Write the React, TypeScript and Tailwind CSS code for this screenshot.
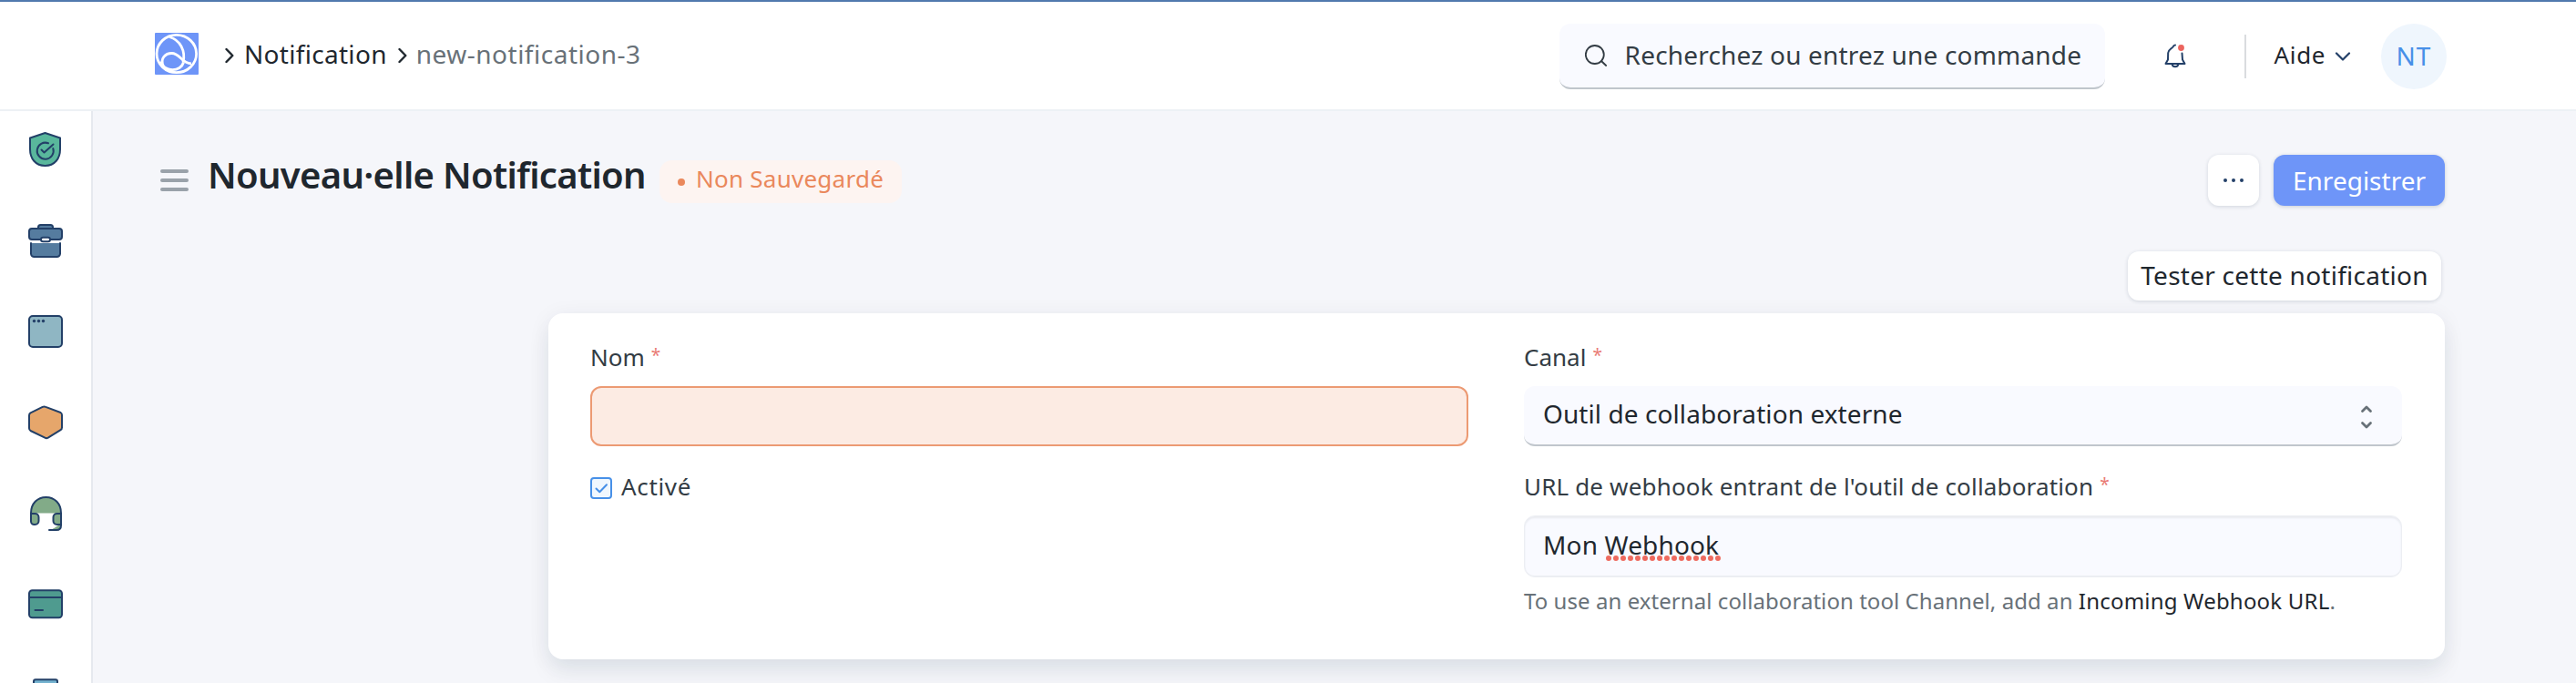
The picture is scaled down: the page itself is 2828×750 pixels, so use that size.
import type { ReactNode } from "react";

const INK = "#234068";

function Tile({ children }: { children: ReactNode }) {
  return (
    <svg className="block size-[40px] shrink-0" viewBox="0 0 40 40" fill="none" stroke={INK} strokeWidth="2" strokeLinecap="round" strokeLinejoin="round">
      {children}
    </svg>
  );
}

function Sidebar() {
  return (
    <nav className="flex w-[102px] shrink-0 flex-col items-center gap-[60px] border-r-2 border-[#e6e9ef] bg-white pt-[22px]">
      <Tile>
        <path d="M19.5 2 36 7.5V20c0 10-6 18-16.500 18S3 30 3 20V7.500Z" fill="#59b79c" />
        <path d="M23 13.300a9 9 0 1 0 5.300 5.700" />
        <path d="m15.500 20.500 3 3 10-9" />
      </Tile>
      <Tile>
        <path d="M12 7V5.500a2.500 2.500 0 0 1 2.500-2.500h11A2.500 2.500 0 0 1 28 5.500V7" fill="#557c9f" />
        <rect x="2" y="7" width="36" height="12" rx="3" fill="#557c9f" />
        <path d="M4 23v11.500A3.500 3.500 0 0 0 7.500 38h25a3.500 3.500 0 0 0 3.500-3.500V23" fill="#557c9f" />
        <rect x="15" y="16.700" width="10" height="4.600" rx="2.300" fill="#fff" />
      </Tile>
      <Tile>
        <rect x="2" y="3" width="36" height="34" rx="4" fill="#8fb6c3" />
        <g fill={INK} stroke="none">
          <circle cx="7.500" cy="8.500" r="1.700" />
          <circle cx="12.500" cy="8.500" r="1.700" />
          <circle cx="17.500" cy="8.500" r="1.700" />
        </g>
      </Tile>
      <Tile>
        <path d="M16.700 2.900q1.800-.8 3.500 0L36.500 9q1.500.9 1.500 2.700V25.500q0 1.800-1.500 2.600L22.800 36.700q-1.800.9-3.500 0L3.500 29Q2 28 2 26.300V12.200q0-1.800 1.500-2.800Z" fill="#e6a66b" />
      </Tile>
      <Tile>
        <path d="M4 19.500C4 9 11 2 20.500 2S37 9 37 19.500Z" fill="#82ab88" stroke="none" />
        <path d="M37 31c-2 1-8 6-13 7.500h8q5 0 5-5Z" fill="#82ab88" stroke="none" />
        <path d="M4 20h4.500a4 4 0 0 1 4 4v4a4 4 0 0 1-4 4h-1A3.500 3.500 0 0 1 4 28.500Z" fill="#82ab88" />
        <path d="M37 20h-4.500a4 4 0 0 0-4 4v4a4 4 0 0 0 4 4H37Z" fill="#82ab88" />
        <path d="M4 21v-1.500C4 9 11 2 20.500 2S37 9 37 19.500V33q0 5-5 5h-8" />
      </Tile>
      <Tile>
        <rect x="2" y="4.300" width="36" height="30" rx="3.500" fill="#4f9b8f" />
        <path d="M2 12h36M8.500 26h8.500" />
      </Tile>
      <Tile>
        <rect x="7" y="2.300" width="26" height="34" rx="2" fill="#74b2cf" />
      </Tile>
    </nav>
  );
}

function Chevron() {
  return (
    <svg className="mt-[4px] block h-[18px] w-[10px] shrink-0" viewBox="0 0 10 18" fill="none" stroke="#1f272e" strokeWidth="2.400" strokeLinecap="round" strokeLinejoin="round">
      <path d="m1.500 2 6.800 7-6.800 7" />
    </svg>
  );
}

function Header() {
  return (
    <header className="flex h-[122px] shrink-0 items-center justify-between border-y-2 border-t-[#5179ae] border-b-[#edf1f5] bg-white pr-[142px] pl-[170px] text-[28px] leading-[40px] whitespace-nowrap">
      <div className="mb-[4px] flex items-center">
        <svg className="block h-[46px] w-[48px]" viewBox="0 0 48 46" fill="none" stroke="#fff" strokeWidth="2.800">
          <rect width="48" height="46" rx="1" fill="#6e95f8" stroke="none" />
          <ellipse cx="23.800" cy="23" rx="21.800" ry="20.700" />
          <path d="M16 4.500C28 8 34 20 31 32.500" />
          <path d="M9.500 37C5 28 12 22.500 18.500 22.500c9.500 0 10.500 11.300 21.500 11.300" />
          <path d="M7 31.500C8 40 20 43 27 38.500q3.500-2.500 4.500-6" />
        </svg>
        <div className="ml-[29px]"><Chevron /></div>
        <span className="ml-[11px] tracking-[0.300px] text-[#1f272e]">Notification</span>
        <div className="ml-[12px]"><Chevron /></div>
        <span className="ml-[10px] tracking-[0.500px] text-[#687178]">new-notification-3</span>
      </div>
      <div className="flex items-center">
        <div className="mt-[2px] flex h-[72px] w-[599px] items-center rounded-[12px] border-b-2 border-[#c0c6cc] bg-[#f9faff] pl-[28px]">
          <svg className="block size-[24px]" viewBox="0 0 24 24" fill="none" stroke="#333c44" strokeWidth="1.800" strokeLinecap="round">
            <circle cx="10.800" cy="11" r="10" />
            <path d="m18 18 5.200 5" />
          </svg>
          <span className="mb-[3px] ml-[20px] tracking-[0.180px] text-[#333c44]">Recherchez ou entrez une commande</span>
        </div>
        <svg className="ml-[64px] block h-[28px] w-[26px]" viewBox="0 0 26 28" fill="none" stroke={INK} strokeWidth="2" strokeLinecap="round" strokeLinejoin="round">
          <path d="M13 2.500C11.500 2.500 11 3.500 10.500 4.500 9 6.500 5.500 7.500 5.200 11L5 18.500 2.500 23h21L21 18.500 20.500 11.500" />
          <path d="M9.500 23.500a3.600 3.600 0 0 0 7 0" />
          <circle cx="19.500" cy="5.500" r="3.400" fill="#ec645e" stroke="none" />
        </svg>
        <div className="mt-[2px] ml-[63px] h-[48px] w-[2px] bg-[#d9dcdf]" />
        <span className="mb-[2px] ml-[31px] text-[26px] tracking-[0.600px] text-[#1f272e]">Aide</span>
        <svg className="mt-[2px] ml-[10px] block h-[10px] w-[18px]" viewBox="0 0 18 10" fill="none" stroke={INK} strokeWidth="2.200" strokeLinecap="round" strokeLinejoin="round">
          <path d="m2 1.500 7 7 7-7" />
        </svg>
        <div className="mt-[2px] ml-[33px] flex size-[72px] items-center justify-center rounded-full bg-[#eff6fd] pb-[3px] text-[#4790e8]"><span className="tracking-[1px]">NT</span></div>
      </div>
    </header>
  );
}

function Label({ children, required }: { children: ReactNode; required?: boolean }) {
  return (
    <div className="flex text-[26px] leading-[36px] whitespace-nowrap text-[#333c44]">
      {children}
      {required && <span className="ml-[7px] text-[19px] leading-[32px] text-[#e97a74]">*</span>}
    </div>
  );
}

export default function App() {
  return (
    <div className="flex h-[750px] flex-col overflow-hidden bg-[#f5f6fa] font-['Noto_Sans',sans-serif] text-[#1f272e]">
      <Header />
      <div className="flex min-h-0 flex-1">
        <Sidebar />
        <main className="min-w-0 flex-1 pt-[48px] pr-[144px] pl-[74px] whitespace-nowrap">
          <div className="flex h-[56px] items-center">
            <div className="flex w-[31px] flex-col gap-[6px]">
              <div className="h-[4px] rounded-full bg-[#9aa2aa]" />
              <div className="h-[4px] rounded-full bg-[#9aa2aa]" />
              <div className="h-[4px] rounded-full bg-[#9aa2aa]" />
            </div>
            <h1 className="mb-[13px] ml-[21px] w-[496px] text-[40px] leading-[48px] font-semibold tracking-[-0.700px]">Nouveau·elle Notification</h1>
            <div className="mt-[3px] flex h-[47px] w-[266px] items-center rounded-[14px] bg-[#fdf4f1] pl-[20px] text-[#ea885c]">
              <div className="size-[8px] rounded-full bg-[#ea885c]" />
              <span className="mb-[7px] ml-[12px] text-[26px] leading-[36px] tracking-[0.250px]">Non Sauvegardé</span>
            </div>
            <button className="ml-auto flex h-[56px] w-[56px] items-center justify-center gap-[5px] rounded-[12px] bg-white shadow-[0_1px_4px_rgba(17,43,66,0.160)]">
              <i className="size-[4px] rounded-full bg-[#234068]" />
              <i className="size-[4px] rounded-full bg-[#234068]" />
              <i className="size-[4px] rounded-full bg-[#234068]" />
            </button>
            <button className="ml-[16px] flex h-[56px] w-[188px] items-center justify-center rounded-[12px] bg-[#6e95f8] pb-[1px] text-[28px] leading-[40px] text-white shadow-[0_1px_4px_rgba(17,43,66,0.200)]">Enregistrer</button>
          </div>
          <div className="mt-[50px] flex h-[54px] justify-end pr-[4px]">
            <button className="flex h-[54px] w-[344px] items-center justify-center rounded-[12px] bg-white pb-[3px] text-[28px] leading-[40px] tracking-[0.250px] shadow-[0_1px_4px_rgba(17,43,66,0.160)]">Tester cette notification</button>
          </div>
          <section className="mt-[14px] ml-[426px] grid h-[380px] grid-cols-2 gap-x-[61px] rounded-[16px] bg-white pt-[30px] pr-[47px] pl-[46px] shadow-[0_16px_24px_rgba(17,43,66,0.060),0_4px_24px_rgba(17,43,66,0.070)]">
            <div>
              <Label required>Nom</Label>
              <div className="mt-[14px] h-[66px] rounded-[12px] border-2 border-[#ec9a73] bg-[#fcebe3]" />
              <div className="mt-[26px] flex items-start">
                <svg className="mt-[8px] mr-[10px] block size-[24px]" viewBox="0 0 24 24" fill="none">
                  <rect x="1" y="1" width="22" height="22" rx="3" fill="#f0f7fe" stroke="#4790e8" strokeWidth="2" />
                  <path d="m6.500 12.500 3.800 3.800 7.700-8" stroke="#4790e8" strokeWidth="2" strokeLinecap="round" strokeLinejoin="round" />
                </svg>
                <div className="tracking-[0.650px]"><Label>Activé</Label></div>
              </div>
            </div>
            <div>
              <Label required>Canal</Label>
              <div className="mt-[14px] flex h-[66px] items-center justify-between rounded-[12px] border-b-2 border-[#c0c6cc] bg-[#f9faff] pr-[32px] pl-[21px] text-[28px] leading-[40px]">
                <span className="mb-[4px] tracking-[0.080px]">Outil de collaboration externe</span>
                <svg className="mt-[4px] block h-[26px] w-[14px]" viewBox="0 0 14 26" fill="none" stroke="#687178" strokeWidth="2.800" strokeLinecap="round" strokeLinejoin="round">
                  <path d="m2.500 6.500 4.500-4.500 4.500 4.500M2.500 19.500l4.500 4.500 4.500-4.500" />
                </svg>
              </div>
              <div className="mt-[26px] tracking-[0.160px]"><Label required>URL de webhook entrant de l'outil de collaboration</Label></div>
              <div className="mt-[14px] flex h-[68px] items-center rounded-[12px] border border-[#eceef3] bg-[#f9faff] pl-[20px] text-[28px] leading-[40px] shadow-[inset_0_2px_2px_#e9ebf0,inset_0_-1px_0_#eceef2]">
                <span className="mb-[5px] tracking-[0.150px]">
                  Mon{" "}
                  <span className="relative inline-block">
                    Webhook
                    <svg className="absolute top-[32px] left-[1px] h-[6px] w-[126px]" viewBox="0 0 126 6">
                      <path d="M3 3H126" stroke="#ee6a5f" strokeWidth="6" strokeLinecap="round" strokeDasharray="0 8" />
                    </svg>
                  </span>
                </span>
              </div>
              <p className="mt-[9px] text-[24px] leading-[34px] tracking-[0.060px] text-[#687178]">
                To use an external collaboration tool Channel, add an <a className="tracking-[0.200px] text-[#1f272e]">Incoming Webhook URL</a>.
              </p>
            </div>
          </section>
        </main>
      </div>
    </div>
  );
}
